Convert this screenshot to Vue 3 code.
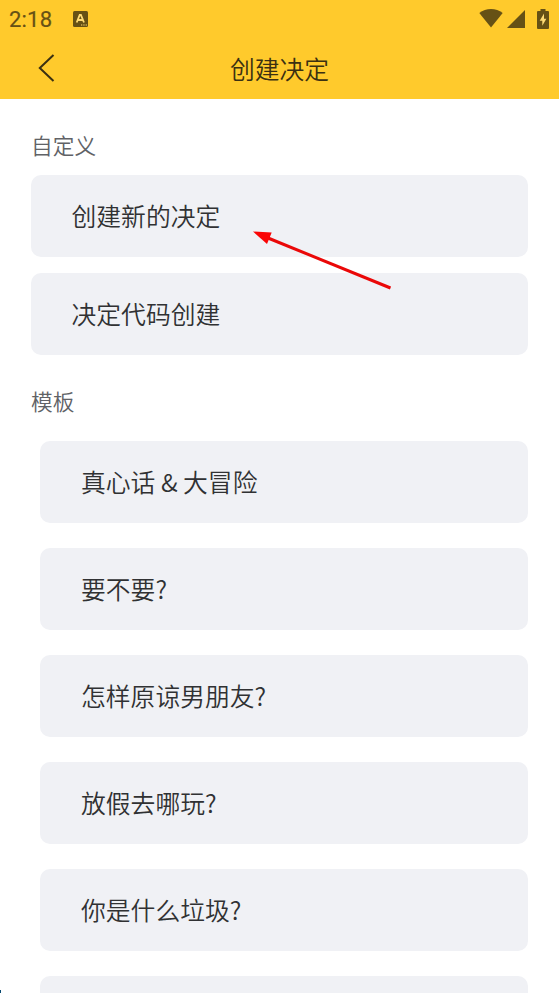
<script setup>
const actions = ['创建新的决定', '决定代码创建']
const templates = ['真心话 & 大冒险', '要不要?', '怎样原谅男朋友?', '放假去哪玩?', '你是什么垃圾?', '']
</script>

<template>
  <main class="screen">
    <header class="top">
      <div class="status">
        <span class="time">2:18</span>
        <svg class="app-mark" width="15" height="16" viewBox="0 0 15 16">
          <rect width="15" height="16" rx="1.5" fill="#665115" />
          <path d="M3.7 11.500 6.700 4h1.200L11 11.500M5 9h4.700" fill="none" stroke="#ffdc75" stroke-width="1.8" />
          <path d="M8 14h1.3m1 0h1.3m1 0h1.3" stroke="#ffdc75" stroke-width="1.2" />
        </svg>
        <div class="indicators">
          <svg width="24" height="19" viewBox="0 0 24 19">
            <path d="M.3 4Q5.5 0 12 0t11.7 4L12 18.5Z" fill="#665115" />
          </svg>
          <svg class="signal" width="18" height="18" viewBox="0 0 18 18">
            <path d="M18 0v18H0Z" fill="#665115" />
          </svg>
          <svg class="battery" width="12" height="20" viewBox="0 0 12 20">
            <path d="M3.5 0h5v2H11q1 0 1 1v16q0 1-1 1H1q-1 0-1-1V3q0-1 1-1h2.500Z" fill="#665115" />
            <path d="M7 4.500 2.700 11.800h2.600v5L9.400 9.700H7Z" fill="#ffdc75" />
          </svg>
        </div>
      </div>
      <nav class="bar">
        <svg class="back" width="18" height="30" viewBox="0 0 18 30">
          <path d="M16.500 2 2.800 15l13.700 13" fill="none" stroke="#3b3012" stroke-width="2" />
        </svg>
        <h1>创建决定</h1>
      </nav>
    </header>

    <section class="custom">
      <h2>自定义</h2>
      <div class="list">
        <div v-for="item in actions" :key="item" class="card">{{ item }}</div>
      </div>
    </section>
    <section class="templates">
      <h2>模板</h2>
      <div class="list">
        <div v-for="item in templates" :key="item" class="card">{{ item }}</div>
      </div>
    </section>

    <svg class="pointer" width="152" height="72" viewBox="0 0 152 72">
      <path d="M28 18 150.500 68" stroke="#ea0808" stroke-width="3" />
      <path d="m13 11.500 18.700 1-4.700 11.500Z" fill="#fa0505" />
    </svg>
    <i class="corner"></i>
  </main>
</template>

<style>
body {
  margin: 0;
  background: #fff;
}
</style>

<style scoped>
.screen {
  position: relative;
  height: 993px;
  overflow: hidden;
  background: #fff;
  color: #303133;
  font-family: "Noto Sans CJK SC", sans-serif;
  font-weight: 350;
}
.top {
  height: 99px;
  background: #ffca2c;
}
.status {
  display: flex;
  align-items: center;
  height: 37px;
  padding: 0 10px 0 9px;
}
.time {
  width: 63.500px;
  color: #665115;
  font-family: Roboto, sans-serif;
  font-size: 22px;
  font-weight: 400;
  line-height: 36px;
  padding-top: 2px;
  letter-spacing: 0.2px;
  -webkit-text-stroke: 0.2px #665115;
}
.indicators {
  display: flex;
  align-items: center;
  margin-left: auto;
}
.signal {
  margin-left: 4px;
}
.battery {
  margin-left: 12px;
}
.bar {
  display: grid;
  grid-template-columns: 60px 1fr 60px;
  align-items: center;
  height: 62px;
}
.back {
  margin-left: 37px;
}
h1 {
  margin: 0;
  padding-bottom: 1px;
  color: #3b3012;
  font-size: 24.800px;
  font-weight: 350;
  line-height: 60px;
  text-align: center;
}
section {
  padding: 0 31px;
}
.custom {
  padding-top: 31px;
}
.templates {
  padding-top: 31px;
}
h2 {
  margin: 0;
  color: #606266;
  font-size: 21.700px;
  font-weight: 350;
  line-height: 30px;
}
.list {
  display: grid;
  gap: 16px;
  padding-top: 15px;
}
.templates .list {
  gap: 25px;
  padding: 25px 0 0 9px;
}
.card {
  height: 82px;
  padding-left: 40.500px;
  border-radius: 10px;
  background: #f0f1f5;
  font-size: 24.800px;
  line-height: 80px;
}
.templates .card {
  padding-left: 41px;
}
.pointer {
  position: absolute;
  top: 220px;
  left: 240px;
}
.corner {
  position: absolute;
  bottom: 0;
  left: 0;
  width: 1px;
  height: 3px;
  background: #084a70;
}
</style>
